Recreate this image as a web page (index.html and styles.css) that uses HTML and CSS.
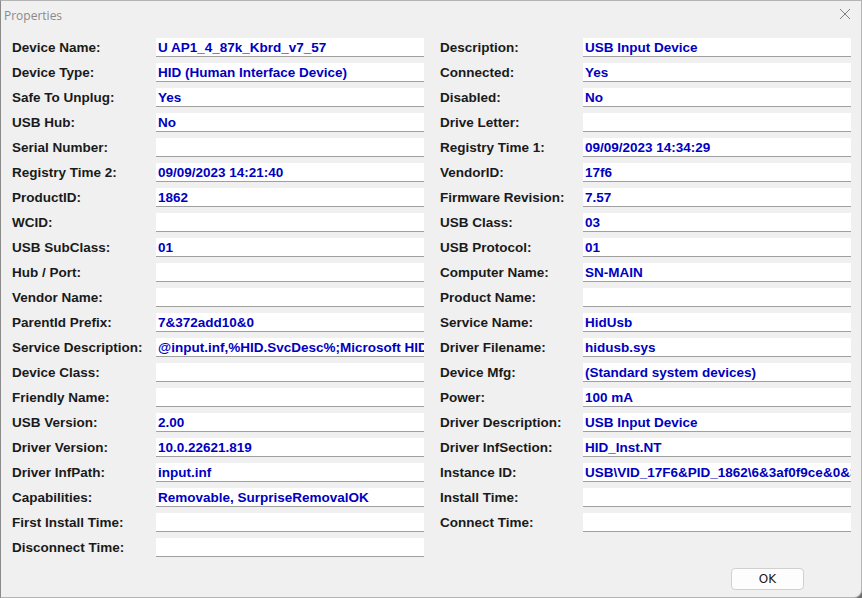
FILE: index.html
```html
<!DOCTYPE html>
<html>
<head>
  <title>Properties</title>
  <meta charset="UTF-8" />
  <link rel="stylesheet" href="styles.css">
</head>
<body>
  <div class="window">
    <div class="title-bar">
      <span class="title">Properties</span>
      <span class="close">
        <svg width="12" height="12" viewBox="0 0 12 12"><path d="M1 1 L11 11 M11 1 L1 11" stroke="#808080" stroke-width="1" fill="none"/></svg>
      </span>
    </div>

    <div class="fields">
      <div class="column left">
        <div class="row"><span class="label">Device Name:</span><span class="value">U AP1_4_87k_Kbrd_v7_57</span></div>
        <div class="row"><span class="label">Device Type:</span><span class="value">HID (Human Interface Device)</span></div>
        <div class="row"><span class="label">Safe To Unplug:</span><span class="value">Yes</span></div>
        <div class="row"><span class="label">USB Hub:</span><span class="value">No</span></div>
        <div class="row"><span class="label">Serial Number:</span><span class="value"></span></div>
        <div class="row"><span class="label">Registry Time 2:</span><span class="value">09/09/2023 14:21:40</span></div>
        <div class="row"><span class="label">ProductID:</span><span class="value">1862</span></div>
        <div class="row"><span class="label">WCID:</span><span class="value"></span></div>
        <div class="row"><span class="label">USB SubClass:</span><span class="value">01</span></div>
        <div class="row"><span class="label">Hub / Port:</span><span class="value"></span></div>
        <div class="row"><span class="label">Vendor Name:</span><span class="value"></span></div>
        <div class="row"><span class="label">ParentId Prefix:</span><span class="value">7&amp;372add10&amp;0</span></div>
        <div class="row"><span class="label">Service Description:</span><span class="value">@input.inf,%HID.SvcDesc%;Microsoft HID Class Driver</span></div>
        <div class="row"><span class="label">Device Class:</span><span class="value"></span></div>
        <div class="row"><span class="label">Friendly Name:</span><span class="value"></span></div>
        <div class="row"><span class="label">USB Version:</span><span class="value">2.00</span></div>
        <div class="row"><span class="label">Driver Version:</span><span class="value">10.0.22621.819</span></div>
        <div class="row"><span class="label">Driver InfPath:</span><span class="value">input.inf</span></div>
        <div class="row"><span class="label">Capabilities:</span><span class="value">Removable, SurpriseRemovalOK</span></div>
        <div class="row"><span class="label">First Install Time:</span><span class="value"></span></div>
        <div class="row"><span class="label">Disconnect Time:</span><span class="value"></span></div>
      </div>

      <div class="column right">
        <div class="row"><span class="label">Description:</span><span class="value">USB Input Device</span></div>
        <div class="row"><span class="label">Connected:</span><span class="value">Yes</span></div>
        <div class="row"><span class="label">Disabled:</span><span class="value">No</span></div>
        <div class="row"><span class="label">Drive Letter:</span><span class="value"></span></div>
        <div class="row"><span class="label">Registry Time 1:</span><span class="value">09/09/2023 14:34:29</span></div>
        <div class="row"><span class="label">VendorID:</span><span class="value">17f6</span></div>
        <div class="row"><span class="label">Firmware Revision:</span><span class="value">7.57</span></div>
        <div class="row"><span class="label">USB Class:</span><span class="value">03</span></div>
        <div class="row"><span class="label">USB Protocol:</span><span class="value">01</span></div>
        <div class="row"><span class="label">Computer Name:</span><span class="value">SN-MAIN</span></div>
        <div class="row"><span class="label">Product Name:</span><span class="value"></span></div>
        <div class="row"><span class="label">Service Name:</span><span class="value">HidUsb</span></div>
        <div class="row"><span class="label">Driver Filename:</span><span class="value">hidusb.sys</span></div>
        <div class="row"><span class="label">Device Mfg:</span><span class="value">(Standard system devices)</span></div>
        <div class="row"><span class="label">Power:</span><span class="value">100 mA</span></div>
        <div class="row"><span class="label">Driver Description:</span><span class="value">USB Input Device</span></div>
        <div class="row"><span class="label">Driver InfSection:</span><span class="value">HID_Inst.NT</span></div>
        <div class="row"><span class="label">Instance ID:</span><span class="value">USB\VID_17F6&amp;PID_1862\6&amp;3af0f9ce&amp;0&amp;3</span></div>
        <div class="row"><span class="label">Install Time:</span><span class="value"></span></div>
        <div class="row"><span class="label">Connect Time:</span><span class="value"></span></div>
      </div>
    </div>

    <div class="footer">
      <button class="ok-button">OK</button>
    </div>
  </div>
</body>
</html>
```

FILE: styles.css
```css
:root {
  --window-bg: #f0f0f0;
  --label: #1a1a1a;
  --value: #0000c0;
  --field-line: #a0a0a0;
}

body {
  margin: 0;
  padding: 0;
  background-color: #6e6e6e;
  font-family: "Liberation Sans", Arial, sans-serif;
}

.window {
  width: 862px;
  height: 598px;
  box-sizing: border-box;
  background-color: var(--window-bg);
  border: 1px solid #b4b4b4;
  border-left-color: #8a8a8a;
  border-radius: 0 0 8px 0;
  display: flex;
  flex-direction: column;
}

/* Title bar */
.title-bar {
  height: 28px;
  display: flex;
  align-items: center;
  justify-content: space-between;
  padding: 0 10px 0 3px;
}

.title {
  font-family: "Open Sans", "Noto Sans", sans-serif;
  font-size: 12px;
  color: #8a8a8a;
}

.close {
  display: inline-flex;
  margin-top: -2px;
}

/* Fields */
.fields {
  display: flex;
  gap: 16px;
  padding: 9px 0 0 11px;
}

.column {
  display: flex;
  flex-direction: column;
  gap: 6px;
}

.row {
  display: flex;
  align-items: center;
  height: 19px;
}

.label {
  width: 144px;
  flex-shrink: 0;
  font-size: 13.5px;
  font-weight: bold;
  color: var(--label);
}

.right .label {
  width: 143px;
}

.value {
  width: 268px;
  height: 19px;
  box-sizing: border-box;
  background-color: #ffffff;
  border-bottom: 1px solid var(--field-line);
  padding: 1px 0 0 2px;
  font-size: 13.5px;
  font-weight: bold;
  color: var(--value);
  white-space: nowrap;
  overflow: hidden;
  line-height: 17px;
}

/* Footer */
.footer {
  margin-top: auto;
  display: flex;
  justify-content: flex-end;
  padding: 0 57px 7px 0;
}

.ok-button {
  width: 73px;
  height: 22px;
  background-color: #fdfdfd;
  border: 1px solid #d0d0d0;
  border-radius: 4px;
  font-family: "DejaVu Sans", sans-serif;
  font-size: 12px;
  color: #1a1a1a;
  padding: 0;
}
```
